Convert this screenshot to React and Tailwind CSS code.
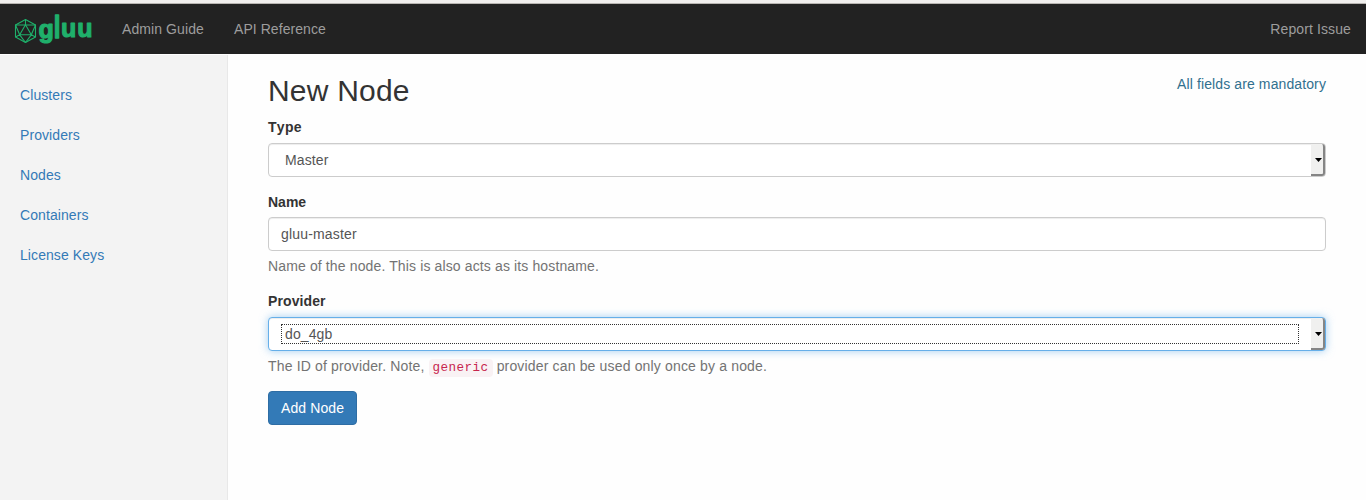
function Logo() {
  return (
    <svg width="84" height="50" viewBox="12 4 84 50" className="block" aria-label="gluu">
      <g fill="none" stroke="#1fb06b" strokeWidth="1.1" strokeLinejoin="round">
        <path d="M25.5 19.5 35.5 25V37L25.5 42.5 15.5 37V25Z" />
        <path d="M25.5 24.8 31.3 34.8H19.7Z" />
        <path d="M25.5 19.5V24.8L15.5 25 19.7 34.8 15.5 37M25.5 24.8 35.5 25 31.3 34.8 35.5 37M19.7 34.8 25.5 42.5 31.3 34.8" />
      </g>
      <g
        fill="#1fb06b"
        stroke="#1fb06b"
        strokeWidth="1.1"
        strokeLinejoin="round"
        fontWeight="700"
        className="tracking-normal font-['Liberation_Sans',sans-serif]"
      >
        <text x="38.6" y="37.8" fontSize="25">g</text>
        <text transform="translate(53.7 37.6) scale(1 1.28)" fontSize="24">l</text>
        <text x="60.9" y="37.4" fontSize="25">u</text>
        <text x="77.2" y="37.4" fontSize="25">u</text>
      </g>
    </svg>
  );
}

function SelectArrow() {
  return (
    <div className="flex h-8 w-[14px] shrink-0 items-center justify-end rounded-r-[3px] border-r-2 border-b-2 border-[#858585] bg-[#f0f0ef] pt-[2px] pr-px">
      <svg width="7" height="4" viewBox="0 0 7 4" className="block">
        <path d="M0 0H7L3.5 4Z" fill="#000" />
      </svg>
    </div>
  );
}

const links = ["Clusters", "Providers", "Nodes", "Containers", "License Keys"];

export default function App() {
  return (
    <div className="flex h-[500px] w-full flex-col overflow-hidden bg-[#fefefe] font-['Liberation_Sans',Arial,sans-serif] text-[14px] leading-5 tracking-[0.11px] text-[#333]">
      <div className="h-1 shrink-0 border-b border-[#b8b5b2] bg-[#f0efed]" />
      <nav className="flex h-[50px] shrink-0 items-center bg-[#222] whitespace-nowrap text-[#9d9d9d]">
        <div className="w-[110px] pl-3">
          <Logo />
        </div>
        <a className="ml-3 w-[82px] tracking-[0.09px]">Admin Guide</a>
        <a className="ml-[30px] tracking-[0.06px]">API Reference</a>
        <a className="mr-[15px] ml-auto">Report Issue</a>
      </nav>
      <div className="flex min-h-0 flex-1 pt-px">
        <aside className="flex w-[228px] shrink-0 flex-col gap-5 border-r border-[#e8e8e8] bg-[#f3f3f3] pt-[30px] pl-5 tracking-[0.08px] text-[#337ab7]">
          {links.map((l) => (
            <a key={l}>{l}</a>
          ))}
        </aside>
        <main className="flex-1 pr-10 pl-10">
          <div className="flex h-[62px] justify-between">
            <h1 className="pt-[19px] text-[30px] leading-[33px] tracking-[0.2px]">New Node</h1>
            <span className="pt-[19px] text-[#31708f]">All fields are mandatory</span>
          </div>
          <label className="block font-bold tracking-[0.3px] [font-kerning:none]">Type</label>
          <div className="mt-[6px] flex h-[34px] items-center rounded border border-[#ccc] bg-white pl-4 text-[#555] shadow-[inset_0_1px_1px_rgba(0,0,0,0.075)]">
            <span className="flex-1">Master</span>
            <SelectArrow />
          </div>
          <label className="mt-[15px] block font-bold tracking-normal">Name</label>
          <div className="mt-[5px] flex h-[34px] items-center rounded border border-[#ccc] bg-white pl-3 tracking-[0.17px] text-[#555] shadow-[inset_0_1px_1px_rgba(0,0,0,0.075)]">
            gluu-master
          </div>
          <p className="mt-[5px] tracking-[0.13px] text-[#737373]">Name of the node. This is also acts as its hostname.</p>
          <label className="mt-[15px] block font-bold">Provider</label>
          <div className="mt-[6px] flex h-[34px] items-center rounded border border-[#66afe9] bg-white pl-3 text-[#555] shadow-[inset_0_1px_1px_rgba(0,0,0,0.075),0_0_8px_rgba(102,175,233,0.6)]">
            <span className="mr-3 h-5 flex-1 border border-dotted border-[#333] pl-[3px] leading-[18px]">do_4gb</span>
            <SelectArrow />
          </div>
          <p className="mt-[5px] h-5 tracking-[0.16px] text-[#737373]">
            The ID of provider. Note,{" "}
            <code className="rounded bg-[#f9f2f4] px-1 py-0.5 font-['Liberation_Mono',monospace] text-[12.6px] tracking-[0.44px] text-[#c7254e]">generic</code>{" "}
            provider can be used only once by a node.
          </p>
          <button className="mt-[15px] block h-[34px] rounded border border-[#2e6da4] bg-[#337ab7] px-3 text-white">Add Node</button>
        </main>
      </div>
    </div>
  );
}
